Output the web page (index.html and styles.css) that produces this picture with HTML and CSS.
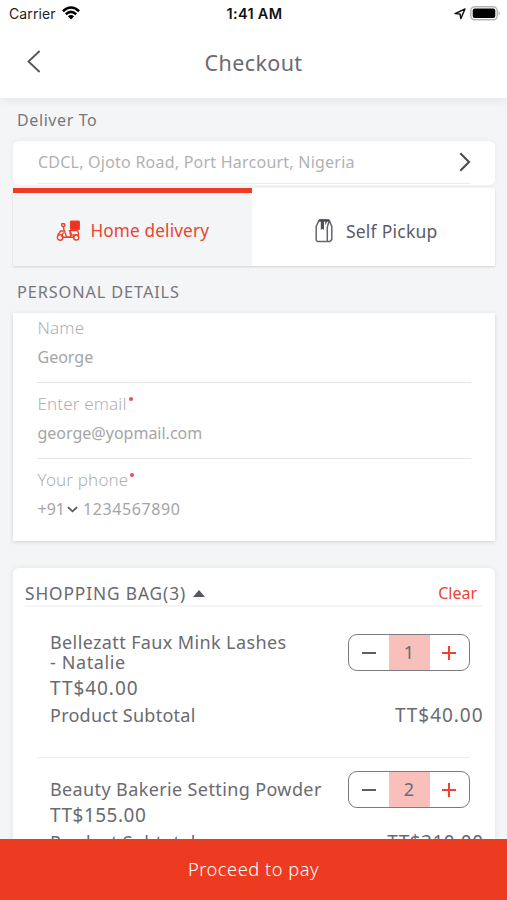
FILE: index.html
```html
<!DOCTYPE html>
<html lang="en">
<head>
<meta charset="utf-8">
<title>Checkout</title>
<link rel="stylesheet" href="styles.css">
</head>
<body>
<div class="app">
  <header class="top">
    <div class="status">
      <div class="carrier"><span>Carrier</span>
        <svg width="18" height="14" viewBox="0 0 18 14" fill="none" stroke="#000" stroke-width="2.5"><path d="M.9 5.2Q9-2.1 17.1 5.2M3.8 8.2Q9 3.6 14.2 8.2"/><path d="M5.9 10.2Q9 7.6 12.1 10.2L9 13.5Z" fill="#000" stroke="none"/></svg>
      </div>
      <span class="time">1:41 AM</span>
      <div class="indicators">
        <svg width="12" height="12" viewBox="0 0 12 12" fill="none" stroke="#111" stroke-width="1.4" stroke-linejoin="round"><path d="M1 5.6 11 1 6.8 10.6 6.1 6Z"/></svg>
        <svg width="31" height="15" viewBox="0 0 31 15"><rect x=".8" y=".8" width="26.4" height="13" rx="4" fill="#fff" stroke="#b5b5b0" stroke-width="1.5"/><rect x="2.7" y="2.5" width="22.6" height="9.6" rx="2" fill="#000"/><path d="M28.6 5Q31 7.3 28.6 9.6Z" fill="#aaa"/></svg>
      </div>
    </div>
    <div class="nav">
      <svg class="back" width="14" height="23" viewBox="0 0 14 23" fill="none" stroke="#55555f" stroke-width="1.9"><path d="M12.6 1 1.5 11.5 12.6 22"/></svg>
      <h1>Checkout</h1>
    </div>
  </header>
  <main>
    <h2 class="label deliver">Deliver To</h2>
    <section class="address">
      <div class="address-row"><span>CDCL, Ojoto Road, Port Harcourt, Nigeria</span>
        <svg width="12" height="20" viewBox="0 0 12 20" fill="none" stroke="#4b4b54" stroke-width="2.1"><path d="M1.3 1.3 10 10 1.3 18.7"/></svg>
      </div>
    </section>
    <section class="tabs">
      <div class="tab active">
        <svg width="25" height="22" viewBox="0 0 26 22" fill="none" stroke="#ed3e2a" stroke-width="1.4" stroke-linecap="round" stroke-linejoin="round"><rect x="15.2" y=".9" width="9" height="8.6" rx=".8" fill="#ed3322"/><path d="M6 3.5h2.7l.7 2-1.8 1.2L6 5.5ZM7.5 6.5 8.5 10l2.5 7.2h4.2l.6-4-2-2.6h8.7l1 3-1 2.5M8 11H4.8L2 15M7.5 13l-2 3.5M14.5 10.6 15 15h8.3M7 17.5h12"/><circle cx="4.3" cy="17.7" r="2.9"/><circle cx="21" cy="17.7" r="2.7"/></svg>
        <span>Home delivery</span>
      </div>
      <div class="tab">
        <svg width="18" height="24" viewBox="0 0 18 24" fill="none" stroke="#66666e" stroke-width="1.5" stroke-linejoin="round"><path d="M4 1.4h10.2l2.6 6v13.2l-2.2 2H2.5L1.2 21V7.4ZM12.3 8v14.4M12.3 8l2-6.5"/><path d="M4 1.4h10.2" stroke="#484852" stroke-width="2.4"/><path d="M5.8 2H9v9l-1.6-1.2L5.8 11ZM10.2 2h2.1l-2 4.5Z" fill="#50505a" stroke="none"/></svg>
        <span>Self Pickup</span>
      </div>
    </section>
    <h2 class="label personal">PERSONAL DETAILS</h2>
    <section class="details">
      <div class="field"><label>Name</label><p>George</p></div>
      <div class="field"><label>Enter email<i></i></label><p>george@yopmail.com</p></div>
      <div class="field"><label>Your phone<i></i></label>
        <p class="phone"><span>+91</span><svg width="11" height="7" viewBox="0 0 11 7" fill="none" stroke="#56565b" stroke-width="1.7"><path d="M1 1.2 5.5 5.3 10 1.2"/></svg><span class="number">1234567890</span></p></div>
    </section>
    <section class="bag">
      <div class="bag-head"><div class="bag-title"><span>SHOPPING BAG(3)</span><b class="caret"></b></div><span class="clear">Clear</span></div>
      <article class="item">
        <div class="item-main">
          <div class="item-info">
            <h3 class="item-name"><span>Bellezatt Faux Mink Lashes</span><br><span>- Natalie</span></h3>
            <p class="price">TT$40.00</p>
          </div>
          <div class="qty"><svg viewBox="0 0 16 16"><path d="M1 8h14"/></svg><span>1</span><svg class="plus" viewBox="0 0 16 16"><path d="M1 8h14M8 1v14"/></svg></div>
        </div>
        <div class="subtotal"><span>Product Subtotal</span><span class="price">TT$40.00</span></div>
      </article>
      <hr>
      <article class="item second">
        <div class="item-main">
          <div class="item-info">
            <h3 class="item-name"><span>Beauty Bakerie Setting Powder</span></h3>
            <p class="price">TT$155.00</p>
          </div>
          <div class="qty"><svg viewBox="0 0 16 16"><path d="M1 8h14"/></svg><span>2</span><svg class="plus" viewBox="0 0 16 16"><path d="M1 8h14M8 1v14"/></svg></div>
        </div>
        <div class="subtotal"><span>Product Subtotal</span><span class="price">TT$310.00</span></div>
      </article>
    </section>
  </main>
  <footer class="pay"><span>Proceed to pay</span></footer>
</div>
</body>
</html>
```

FILE: styles.css
```css
* { box-sizing: border-box; margin: 0; padding: 0; }
body { background: #f4f5f7; color: #6a6a71; font-family: "Noto Sans", sans-serif; font-size: 18px; }
h1, h2, h3 { font-weight: 400; }
svg { display: block; flex: none; }
span { white-space: nowrap; }
.app { height: 900px; display: flex; flex-direction: column; overflow: hidden; }
.top { flex: none; height: 98px; background: #fff; box-shadow: 0 2px 10px rgba(0,0,0,.07); }
.status { height: 27px; display: grid; grid-template-columns: 1fr auto 1fr; align-items: center; padding: 0 6px 0 9px; font-family: Inter, sans-serif; font-size: 14px; color: #111; }
.carrier { display: flex; align-items: center; gap: 6px; font-size: 14px; letter-spacing: .1px; color: #222; }
.carrier svg { margin-top: -1px; }
.time { font-weight: 600; font-size: 14.5px; letter-spacing: .3px; margin-right: 1px; }
.indicators { display: flex; align-items: center; justify-content: flex-end; gap: 4px; }
.nav { height: 71px; display: grid; grid-template-columns: 1fr auto 1fr; align-items: center; padding: 0 27px; }
.back { margin-top: -2px; }
h1 { font-size: 21.5px; letter-spacing: .4px; line-height: 70px; }
main { flex: 1; min-height: 0; overflow: hidden; padding: 0 12px 0 13px; }
.label { font-size: 16px; line-height: 22px; padding-left: 4px; color: #77777c; }
.deliver { margin-top: 11px; letter-spacing: .6px; }
.address { height: 44px; margin-top: 10px; padding: 0 24px 1px; background: #fff; border-radius: 6px; box-shadow: 0 0 5px rgba(0,0,0,.05); }
.address-row { height: 43px; display: flex; justify-content: space-between; align-items: center; border-bottom: 1px solid #ececee; font-size: 16px; letter-spacing: .23px; color: #b1b1b3; }
.address-row span { padding-left: 1px; }
.tabs { height: 78px; margin-top: 3px; display: flex; box-shadow: 0 1px 2px rgba(0,0,0,.15); }
.tab { flex: 1; display: flex; align-items: center; justify-content: center; gap: 13px; background: #fff; padding: 7px 0 0 6px; font-size: 17.5px; letter-spacing: .25px; color: #5b5b63; }
.tab.active { background: #f4f5f7; color: #ed4330; border-top: 5px solid #ed3b24; padding: 2px 0 0 1px; gap: 9px; font-size: 17.2px; letter-spacing: .15px; }
.personal { margin-top: 15px; font-size: 16.3px; letter-spacing: .9px; }
.details { height: 228px; margin-top: 10px; background: #fff; padding: 0 24px; box-shadow: 0 1px 4px rgba(0,0,0,.14); }
.field { height: 76px; border-bottom: 1.5px solid #e4e4e6; padding-top: 9px; }
.field:first-child { height: 70px; padding-top: 3px; }
.field:last-child { border: 0; }
.field label { display: flex; height: 24px; line-height: 24px; font-size: 17px; font-weight: 300; letter-spacing: .15px; color: #b0b0b3; }
.field label i { width: 4px; height: 4px; border-radius: 50%; background: #ee4c55; margin: 5px 0 0 2px; }
.field label, .field p { padding-left: .5px; }
.field p { height: 24px; line-height: 24px; margin-top: 5px; font-size: 16px; color: #a5a5a8; }
.field .phone { display: flex; align-items: center; gap: 5px; }
.phone svg { margin-left: -3px; }
.number { letter-spacing: .6px; }
.bag { height: 420px; margin-top: 27px; background: #fff; border-radius: 6px 6px 0 0; box-shadow: 0 0 6px rgba(0,0,0,.08); }
.bag-head { height: 39px; margin: 0 13px 0 12px; padding: 13px 5px 0 0; border-bottom: 2px solid #f5f5f6; display: flex; justify-content: space-between; align-items: center; }
.bag-title { display: flex; align-items: center; gap: 7px; font-size: 17.3px; letter-spacing: .9px; }
.caret { border: 6px solid transparent; border-bottom: 7px solid #56565d; border-top: 0; }
.clear { color: #ed4330; font-size: 16px; }
.item { margin: 0 12px 0 25px; padding: 25px 0 0 12px; height: 150px; }
.item-main { display: flex; justify-content: space-between; align-items: flex-start; padding-right: 13px; }
.item-name { font-size: 18px; line-height: 20px; letter-spacing: .38px; }
.item-name span:nth-of-type(2) { letter-spacing: .6px; }
.qty { flex: none; width: 122px; height: 37px; margin-top: 2px; border: 1.5px solid #7b7b81; border-radius: 9px; display: grid; grid-template-columns: 1fr 41px 1fr; align-items: center; justify-items: center; overflow: hidden; }
.qty span { width: 41px; height: 35px; background: #f9c0bb; text-align: center; line-height: 34px; }
.qty svg { width: 16px; height: 16px; fill: none; stroke: #5e5e69; stroke-width: 2.1; }
.qty .plus { stroke: #ed4330; }
.price { font-size: 19px; line-height: 27px; letter-spacing: .95px; }
.subtotal .price { margin-right: -.5px; }
.item-info .price { margin-top: 3px; }
.second .price { letter-spacing: .5px; }
.subtotal { display: flex; justify-content: space-between; line-height: 27px; letter-spacing: .25px; }
hr { border: 0; height: 1px; margin: 0 25px; background: #efeff0; }
.item.second { padding-top: 13px; }
.second .qty { margin-top: 0; }
.second .item-name { margin-top: 8px; }
.pay { flex: none; height: 61px; background: #ed3b21; color: #fff; display: flex; align-items: center; justify-content: center; padding-bottom: 2px; font-size: 18.3px; font-weight: 300; letter-spacing: .5px; }
```
